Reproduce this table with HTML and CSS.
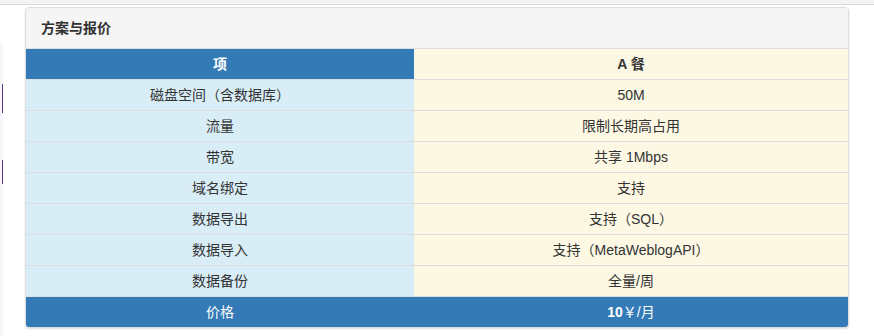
FILE: index.html
```html
<!DOCTYPE html>
<html lang="zh">
<head>
<meta charset="utf-8">
<title>方案与报价</title>
<link rel="stylesheet" href="styles.css">
</head>
<body>
<div class="topbar"></div>
<div class="main">
  <aside class="side">
    <span class="mark mark-1"></span>
    <span class="mark mark-2"></span>
  </aside>
  <section class="panel">
    <div class="panel-heading">方案与报价</div>
    <table class="plan">
      <thead>
        <tr class="head">
          <th class="c1">项</th>
          <th class="c2">A 餐</th>
        </tr>
      </thead>
      <tbody>
        <tr><td class="c1">磁盘空间（含数据库）</td><td class="c2">50M</td></tr>
        <tr><td class="c1">流量</td><td class="c2">限制长期高占用</td></tr>
        <tr><td class="c1">带宽</td><td class="c2">共享 1Mbps</td></tr>
        <tr><td class="c1">域名绑定</td><td class="c2">支持</td></tr>
        <tr><td class="c1">数据导出</td><td class="c2">支持（SQL）</td></tr>
        <tr><td class="c1">数据导入</td><td class="c2">支持（MetaWeblogAPI）</td></tr>
        <tr><td class="c1">数据备份</td><td class="c2">全量/周</td></tr>
        <tr class="price"><td class="c1">价格</td><td class="c2"><strong>10</strong>￥/月</td></tr>
      </tbody>
    </table>
  </section>
</div>
</body>
</html>
```

FILE: styles.css
```css
html, body {
  margin: 0;
  padding: 0;
  background: #fff;
}
body {
  font-family: "Liberation Sans", "Noto Sans CJK SC", sans-serif;
  font-size: 14px;
  line-height: 20px;
  color: #333;
}
.topbar {
  height: 4px;
  background: #f3f3f3;
  border-bottom: 1px solid #d9d9d9;
}
.main {
  display: flex;
  align-items: flex-start;
}
.side {
  width: 3px;
  background: #f7f5fa;
  margin-top: 38px;
  height: 300px;
  display: flex;
  flex-direction: column;
  align-items: flex-end;
}
.mark {
  display: block;
  width: 1px;
  background: #5b3d8a;
}
.mark-1 {
  margin-top: 41px;
  height: 29px;
}
.mark-2 {
  margin-top: 47px;
  height: 24px;
}
.panel {
  margin-left: 22px;
  margin-top: 2px;
  width: 822px;
  border: 1px solid #ddd;
  border-radius: 4px;
  box-shadow: 0 1px 2px rgba(0, 0, 0, 0.12);
  background: #fff;
}
.panel-heading {
  background: #f5f5f5;
  padding: 10px 15px;
  border-bottom: 1px solid #ddd;
  border-radius: 3px 3px 0 0;
  font-weight: bold;
  color: #333;
}
.plan {
  width: 100%;
  border-collapse: collapse;
  border-spacing: 0;
}
.plan th, .plan td {
  padding: 5px;
  text-align: center;
  line-height: 20px;
  border-top: 1px solid #ddd;
}
.plan thead th {
  border-top: 0;
}
.plan .c1 {
  width: 378px;
  background: #d9edf7;
}
.plan .c2 {
  background: #fcf8e3;
}
.plan .head .c1 {
  background: #337ab7;
  color: #fff;
}
.plan .head .c2 {
  color: #333;
}
.plan .price td {
  background: #337ab7;
  color: #fff;
}
.plan .price .c1 {
  border-bottom-left-radius: 3px;
}
.plan .price .c2 {
  border-bottom-right-radius: 3px;
}
```
